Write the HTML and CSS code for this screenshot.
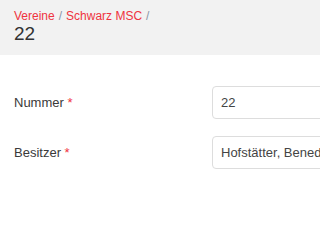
FILE: index.html
```html
<!DOCTYPE html>
<html>
<head>
<meta charset="utf-8">
<link rel="stylesheet" href="styles.css">
</head>
<body>
<div class="page">
  <header class="page-header">
    <nav class="breadcrumb">
      <a href="#">Vereine</a><span class="sep">/</span><a href="#">Schwarz MSC</a><span class="sep">/</span>
    </nav>
    <h1 class="title">22</h1>
  </header>
  <form class="form">
    <div class="row">
      <label class="label">Nummer <span class="req">*</span></label>
      <div class="field"><input class="input" type="text" value="22"></div>
    </div>
    <div class="row">
      <label class="label">Besitzer <span class="req">*</span></label>
      <div class="field"><input class="input" type="text" value="Hofstätter, Benedikt"></div>
    </div>
  </form>
</div>
</body>
</html>
```
FILE: styles.css
```css
html, body {
  margin: 0;
  padding: 0;
  background: #ffffff;
  overflow: hidden;
}
.page {
  width: 320px;
  height: 240px;
  overflow: hidden;
  font-family: "Liberation Sans", Arial, sans-serif;
  color: #333333;
}
.page-header {
  background: #f2f2f2;
  padding: 9px 14px 0 14px;
  height: 46px;
}
.breadcrumb {
  font-size: 12px;
  line-height: 14px;
  color: #8a94a6;
}
.breadcrumb a {
  color: #ef3340;
  text-decoration: none;
}
.sep {
  color: #8a94a6;
  margin: 0 4px;
}
.title {
  margin: 0;
  font-size: 19px;
  font-weight: normal;
  line-height: 22px;
  color: #333;
}
.form {
  padding: 31px 0 0 14px;
}
.row {
  display: flex;
  align-items: center;
  margin-bottom: 17px;
}
.label {
  width: 198px;
  flex: none;
  font-size: 13px;
  color: #3a3a3a;
}
.req {
  color: #ef3340;
}
.field {
  flex: none;
  width: 200px;
}
.input {
  box-sizing: border-box;
  width: 200px;
  height: 33px;
  padding: 0 8px;
  border: 1px solid #dddddd;
  border-radius: 4px;
  font-family: "Liberation Sans", Arial, sans-serif;
  font-size: 13px;
  color: #444;
  background: #fff;
  outline: none;
}
```
